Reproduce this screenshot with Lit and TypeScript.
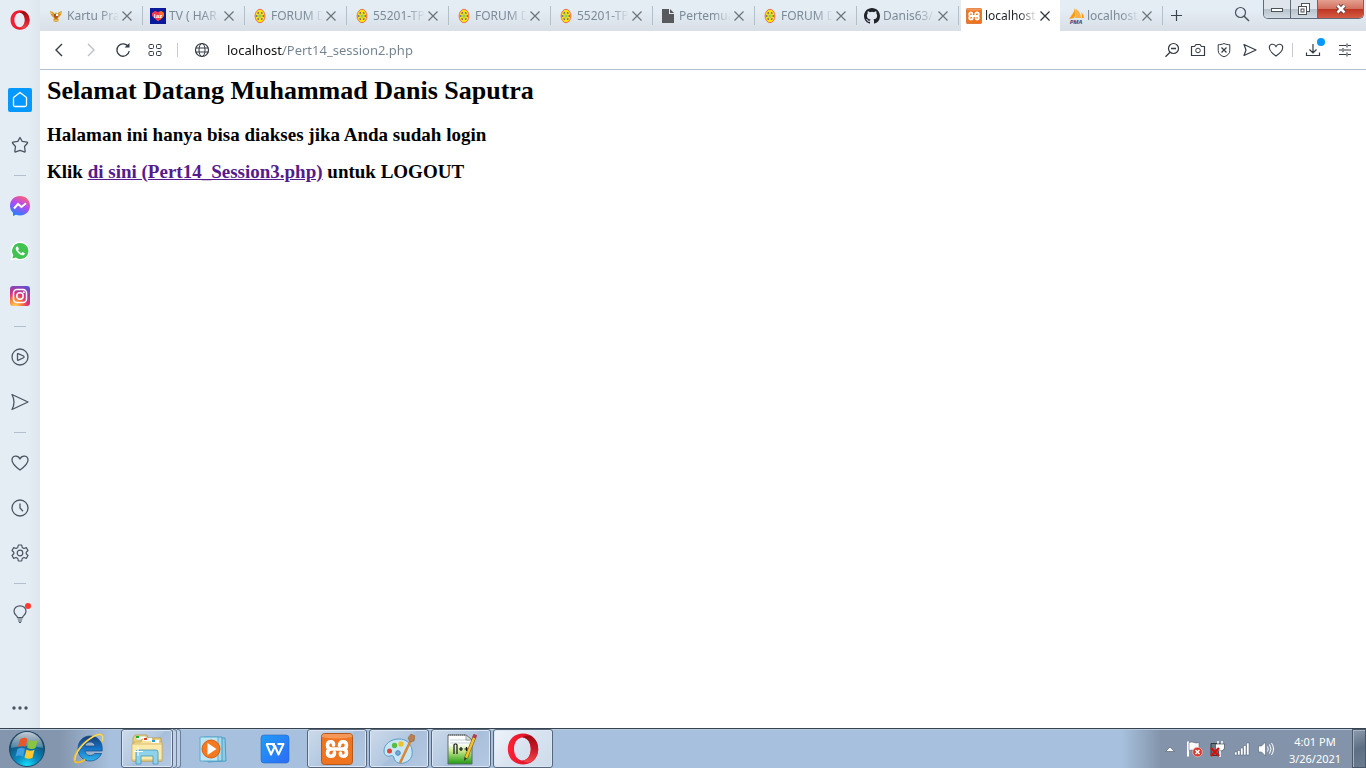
import { LitElement, html, css, svg } from "lit";
import { customElement } from "lit/decorators.js";
import { classMap } from "lit/directives/class-map.js";

const icon = (size: number, body: unknown, box = size) =>
  html`<svg width=${size} height=${size} viewBox="0 0 ${box} ${box}" fill="none" stroke="currentColor" aria-hidden="true">${body}</svg>`;

/* Brand marks */
const operaShape = svg`
  <defs>
    <linearGradient id="op1" x1="0" y1="0" x2="1" y2="0"><stop offset="0" stop-color="#ff2036"/><stop offset=".6" stop-color="#e0162b"/><stop offset="1" stop-color="#d01226"/></linearGradient>
    <linearGradient id="op2" x1="0" y1="0" x2="0" y2="1"><stop offset="0" stop-color="#9c0a12"/><stop offset=".5" stop-color="#c81a26"/><stop offset="1" stop-color="#f5474c"/></linearGradient>
  </defs>
  <path stroke="none" fill="url(#op1)" fill-rule="evenodd" d="M16 .500C7 .500 .800 7 .800 16S7 31.500 16 31.500 31.200 25 31.200 16 25 .500 16 .500zM15.500 4.500c4.800 0 8.300 5 8.300 11.500s-3.500 11.500-8.300 11.500S7 22.500 7 16s3.700-11.500 8.500-11.500z"/>
  <path stroke="none" fill="url(#op2)" d="M15.500 4.500C17.500 2.700 21 1.700 24 3c4.500 2.800 7.200 7.500 7.200 13S28.500 26.200 24 29c-3 1.300-6.500.3-8.500-1.500 4.800 0 8.300-5 8.300-11.500S20.300 4.500 15.500 4.500z"/>`;

const xamppShape = svg`
  <rect x="0.500" y="0.500" width="31" height="31" rx="3" fill="#ee7420" stroke="#b5581c"/>
  <path d="M1 3q0-2 2-2h26q2 0 2 2v1Q16 7 1 4z" fill="#f6a873" stroke="none" opacity=".7"/>
  <path d="M12.500 12Q13 8.700 9.800 8.700 6.500 8.700 6.500 12.300 6.500 16 10.500 16 6.500 16 6.500 19.700 6.500 23.300 9.800 23.300 13.500 23.300 13.500 19.500M19.500 20Q19 23.300 22.200 23.300 25.500 23.300 25.500 19.700 25.500 16 21.500 16 25.500 16 25.500 12.300 25.500 8.700 22.200 8.700 18.500 8.700 18.500 12.500M10.500 16h11" stroke="#fff" stroke-width="3.600" stroke-linejoin="round" stroke-linecap="round"/>`;

const campusShape = svg`
  <ellipse cx="8" cy="8" rx="4.900" ry="6.700" fill="#ffe50a" stroke="#f06c4c" stroke-width="1"/>
  <path d="M5.500 5.500l1.500-1M10.500 5.500L9 4.500M5.500 10.500l1.500 1M10.500 10.500L9 11.500M4.700 7.300v1.400M11.300 7.300v1.400" stroke="#5c4f94" stroke-width="1.500"/>
  <circle cx="8" cy="8" r="1.800" fill="#93d63c" stroke="#c5cf5a" stroke-width=".8"/>`;

const garudaShape = svg`
  <g stroke="none"><path fill="#d99a2b" d="M2 3l3 1 2 2 1-2 1 2 2-2 3-1-1 4-3 3 1 3-3 1-3-1 1-3-3-3z"/>
  <path fill="#b3541e" d="M6 6h4v3l-2 2-2-2z"/><path fill="#fff" d="M8 6h2v2H8z"/><path fill="#e8c05c" d="M5 12h6v1H5zM2 3l3 3-2 0zM14 3l-3 3 2 0z"/></g>`;

const lazShape = svg`
  <rect width="16" height="16" fill="#0a1a9a" stroke="none"/>
  <path d="M8 13L2.500 8V5l2.500-1.500 3 1 3-1L13.500 5v3z" fill="#f5364c" stroke="#f5364c" stroke-linejoin="round"/>
  <path d="M9 4l2.500-1L14 5v3l-4 4z" fill="#ff7a1a" stroke="none" opacity=".8"/>
  <text x="8" y="9.500" text-anchor="middle" font-size="6" font-weight="700" fill="#fff" stroke="none" font-family="Open Sans, sans-serif">laz</text>`;

const fileShape = svg`<path fill="#57595c" stroke="none" d="M2 1h7v5h5v9H2zM10 1l4 4h-4z"/>`;

const githubShape = svg`<path fill="#20242a" stroke="none" d="M8 0C3.580 0 0 3.580 0 8c0 3.540 2.290 6.530 5.470 7.590.4.070.55-.17.55-.38v-1.490c-2.010.37-2.530-.49-2.690-.94-.09-.23-.48-.94-.82-1.130-.28-.15-.68-.52-.01-.53.63-.01 1.080.58 1.230.82.72 1.210 1.870.87 2.330.66.07-.52.28-.87.51-1.070-1.780-.2-3.640-.89-3.640-3.950 0-.87.31-1.590.82-2.150-.08-.2-.36-1.020.08-2.120 0 0 .67-.21 2.200.82a7.600 7.600 0 0 1 4 0c1.530-1.040 2.200-.82 2.200-.82.44 1.100.16 1.920.08 2.120.51.56.82 1.270.82 2.150 0 3.070-1.870 3.750-3.650 3.950.29.25.54.73.54 1.480v2.200c0 .21.15.46.55.38A8 8 0 0 0 16 8c0-4.420-3.580-8-8-8z"/>`;

const pmaShape = svg`
  <g stroke="none"><path fill="#f89c0e" d="M7 0c1 3 1 7-1 10L1 11C3 8 6 5 7 0z"/><path fill="#fbb040" d="M8 1c3 2 5 5 5 9L7 10c1-3 1-6 1-9z"/><path fill="#f89c0e" d="M13 4c2 2 3 4 3 6h-2c0-2 0-4-1-6z"/></g>
  <text x="8" y="15.500" text-anchor="middle" font-size="6" font-weight="700" fill="#46427e" stroke="none" font-style="italic" font-family="Open Sans, sans-serif">PMA</text>`;

/* Line glyphs */
const g = {
  close: svg`<path d="M1.500 1.500l9 9M10.500 1.500l-9 9" stroke-width="1.200"/>`,
  plus: svg`<path d="M6.500 1v11M1 6.500h11" stroke-width="1.200"/>`,
  search: svg`<circle cx="6.500" cy="6.500" r="5" stroke-width="1.200"/><path d="M10 10l5 5" stroke-width="1.500"/>`,
  back: svg`<path d="M11 2L5 8l6 6" stroke-width="1.400"/>`,
  forward: svg`<path d="M5 2l6 6-6 6" stroke-width="1.400"/>`,
  reload: svg`<path d="M13.500 5A6.200 6.200 0 1 0 14.200 9" stroke-width="1.300"/><path d="M9.500 5.500h5V1z" fill="currentColor" stroke="none"/>`,
  grid: svg`<rect x="2" y="2.500" width="4.500" height="4" rx="1"/><rect x="9.500" y="2.500" width="4.500" height="4" rx="1"/><rect x="2" y="9.500" width="4.500" height="4" rx="1"/><rect x="9.500" y="9.500" width="4.500" height="4" rx="1"/>`,
  globe: svg`<circle cx="8" cy="8" r="6.500" stroke-width="1.200"/><ellipse cx="8" cy="8" rx="3" ry="6.500"/><path d="M1.500 6h13M1.500 10h13"/>`,
  zoomOut: svg`<circle cx="9.500" cy="6.500" r="5" stroke-width="1.200"/><path d="M6 10.200L1.500 14.800M7 6.500h5" stroke-width="1.300"/>`,
  camera: svg`<path d="M1.500 4.500h3l1.500-2h4l1.500 2h3v9h-13z" stroke-linejoin="round" stroke-width="1.200"/><circle cx="8" cy="8.500" r="2.300"/>`,
  shield: svg`<path d="M8 1.500c2 1 4 1.200 5.800 1.200V8.500C13.800 12 11 13.800 8 14.800 5 13.800 2.200 12 2.200 8.500V2.700C4 2.700 6 2.500 8 1.500z"/><path d="M5.500 5.500l5 5M10.500 5.500l-5 5" stroke-width="1.200"/>`,
  send: svg`<path d="M2 2.500L14 8 2 13.500 4 8z" stroke-width="1.200" stroke-linejoin="round"/>`,
  heart: svg`<path d="M8 14C5 12 1.300 9 1.300 5.500 1.300 1.700 6.300 1 8 4.500c1.700-3.500 6.700-2.800 6.700 1C14.700 9 11 12 8 14z" stroke-width="1.100"/>`,
  download: svg`<path d="M8 2v8.500M4.500 7.500L8 11l3.500-3.500M1.500 10.500v3h13v-3" stroke-width="1.200"/>`,
  sliders: svg`<path d="M2 3.500h7M11 3.500h3M2 8h3M7 8h7M2 12.500h7M11 12.500h3M10 1.500v4M6 6v4M10 10.500v4" stroke-width="1.100"/>`,
  home: svg`<path d="M2.500 6.500L9 1.500l6.500 5V14q0 1.500-1.500 1.500H4Q2.500 15.500 2.500 14z" stroke="#fff" stroke-width="1.300" stroke-linejoin="round"/>`,
  star: svg`<path d="M9 1.500l2.200 3.800 5 .9c.5.200.5.700.2 1L13.500 10.500l.7 4.800c0 .6-.4.800-.9.600L9 14.300l-4.300 1.600c-.5.200-.9 0-.9-.6l.7-4.800L1.600 7.200c-.3-.3-.3-.8.2-1l5-.9z" stroke-width="1.300" stroke-linejoin="round"/>`,
  play: svg`<circle cx="9" cy="9" r="8" stroke-width="1.300"/><path d="M6.500 6q0-.5.600-.4L12.500 8q1 1 0 1.800L7 12.400q-.5 0-.5-.5z" stroke-width="1.300"/>`,
  sendBig: svg`<path d="M1 1.500L17 9 1 16.500Q5 9 1 1.500z" stroke-width="1.300" stroke-linejoin="round"/>`,
  heartBig: svg`<path d="M9 16C5.500 13.500 1 10 1 6 1 1.500 7 .500 9 5c2-4.500 8-3.500 8 1 0 4-4.500 7.500-8 10z" stroke-width="1.300" stroke-linejoin="round"/>`,
  clock: svg`<circle cx="9" cy="9" r="8" stroke-width="1.300"/><path d="M9 4.500V9l3 3.200" stroke-width="1.300"/>`,
  gear: svg`<path d="M7.300 1h3.400l.5 2.500 1.700 1 2.400-.9L17 6.500 15.200 8.200v1.600L17 11.500l-1.700 2.900-2.400-.9-1.700 1-.5 2.500H7.300l-.5-2.500-1.700-1-2.400.9L1 11.500l1.800-1.700V8.200L1 6.500l1.700-2.900 2.400.9 1.700-1z" stroke-width="1.200" stroke-linejoin="round"/><circle cx="9" cy="9" r="2.800" stroke-width="1.200"/>`,
  bulb: svg`<path d="M6.500 12.500C6 10.500 3 9.500 3 6.200 3 3 5.700.8 9 .8s6 2.200 6 5.400c0 3.300-3 4.300-3.500 6.300z" stroke-width="1.200"/><path d="M6.500 14h5M7 16h4M8 17.500h2" stroke-width="1.200"/>`,
  more: svg`<g fill="currentColor" stroke="none"><circle cx="3" cy="9" r="1.700"/><circle cx="9" cy="9" r="1.700"/><circle cx="15" cy="9" r="1.700"/></g>`,
};

const messenger = svg`
  <defs><linearGradient id="ms" x1=".7" y1="0" x2=".25" y2="1"><stop offset="0" stop-color="#ff6070"/><stop offset=".45" stop-color="#b04af5"/><stop offset="1" stop-color="#1488ff"/></linearGradient></defs>
  <path d="M10 0C4.300 0 0 4.200 0 9.700c0 2.900 1 5.200 3 7V20l3-1.200c1.200.4 2.600.6 4 .6 5.700 0 10-4.200 10-9.700S15.700 0 10 0z" fill="url(#ms)" stroke="none"/>
  <path d="M4 12.500l4-4.500 3.500 3L16 7.300" stroke="#fff" stroke-width="2"/>`;
const whatsapp = svg`
  <path d="M10 .500a9.400 9.400 0 0 0-8.200 14L.500 19.500l5-1.300A9.400 9.400 0 1 0 10 .500z" fill="#fff" stroke="none"/>
  <path d="M10 2a8 8 0 0 0-6.700 12.200L2.400 17.500l3.500-.9A8 8 0 1 0 10 2z" fill="#41c352" stroke="none"/>
  <path d="M7 5.600c-1.700.6-1.800 2.500-.4 4.500 1.700 2.600 4 4.200 6 4.200 1.700 0 2.400-1.300 2.200-2.100l-2.200-1.200-1.100 1.200c-1.300-.4-2.700-1.700-3.400-3l.8-1.100L8 5.800z" fill="#fff" stroke="none"/>`;
const instagram = svg`
  <defs><radialGradient id="ig" cx=".25" cy="1" r="1.150"><stop offset="0" stop-color="#ffd25a"/><stop offset=".3" stop-color="#fa7e3a"/><stop offset=".55" stop-color="#dd2f7c"/><stop offset="1" stop-color="#5851db"/></radialGradient></defs>
  <rect width="20" height="20" rx="3" fill="url(#ig)" stroke="none"/>
  <rect x="3.500" y="3.500" width="13" height="13" rx="3.500" stroke="#fff" stroke-width="1.500"/><circle cx="10" cy="10" r="3.200" stroke="#fff" stroke-width="1.500"/><circle cx="13.800" cy="6.200" r="1" fill="#fff" stroke="none"/>`;

/* Taskbar pictures */
const startOrb = svg`
  <defs>
    <radialGradient id="orb" cx=".5" cy="1" r=".9"><stop offset="0" stop-color="#18e6ff"/><stop offset=".35" stop-color="#0b8fc4"/><stop offset="1" stop-color="#123a5c"/></radialGradient>
    <linearGradient id="gl" x1="0" y1="0" x2="0" y2="1"><stop offset="0" stop-color="#fff" stop-opacity=".75"/><stop offset="1" stop-color="#fff" stop-opacity=".25"/></linearGradient>
  </defs>
  <circle cx="19" cy="19" r="17.500" fill="url(#orb)" stroke="#1b4866"/>
  <path d="M3 18a16 16 0 0 1 32 0q-16-4-32 0z" fill="url(#gl)" stroke="none"/>
  <g stroke="none"><path d="M12 9.500q4-3 7.500-.5l-2 8q-4-2-7.500 0z" fill="#e8562a"/><path d="M21 9.700q4 2.500 8.500.3l-2 8q-4 2-8.300-.3z" fill="#8bc53f"/><path d="M9.500 19q4-2.500 7.500-.3l-2 8q-4-2.300-7.500 0z" fill="#3f9fe0"/><path d="M18.500 19.500q4 2.500 8 .3l-2 8q-4 2-8-.3z" fill="#ffc82e"/></g>`;
const ie = svg`
  <defs><linearGradient id="ie1" x1="0" y1="0" x2="0" y2="1"><stop offset="0" stop-color="#193e78"/><stop offset=".5" stop-color="#1672c4"/><stop offset="1" stop-color="#30b4ee"/></linearGradient></defs>
  <path d="M17 3C10 3 5 8.500 5 15.500S10 28 17 28c5 0 9.500-2.800 11.500-7.500h-7C19 24 12.500 23 12 18h17.200C30 9 25 3 17 3zM12 13c.5-5 9.500-5.500 10 0z" fill="url(#ie1)" stroke="#164b87" stroke-width=".7" fill-rule="evenodd"/>
  <path d="M29 9c4-10-4-9-11-4C8 11-1 24 2 28.500c2 2 7 .5 10-2" stroke="#f5bd25" stroke-width="1.800"/><path d="M29 8c3-8-4-8-11-3C9 11 2 21 2 27" stroke="#fff0a0" stroke-width=".7"/>`;
const explorer = svg`
  <g stroke-width=".8"><path d="M2 5l2-3h12l1 3h13v23H2z" fill="#eed47f" stroke="#b99b45"/><path d="M5 3h10v4H5z" fill="#fff" stroke="#c7bb8b"/><path d="M5 3h3v2H5z" fill="#18b42c" stroke="none"/>
  <path d="M3 9h7l1-3h12l1 3h7v19H1z" fill="#f8e39b" stroke="#c5a653"/><path d="M12 5h9v3h-9z" fill="#fff" stroke="none"/><path d="M13 5h3v2h-3z" fill="#d7432c" stroke="none"/><path d="M20 7h8v3h-8z" fill="#fff" stroke="none"/><path d="M21 7h3v2h-3z" fill="#269bdf" stroke="none"/>
  <path d="M1 11h30v16H1z" fill="#fbeaa9" stroke="#d2b466"/><path d="M5 31V19q0-2 2-2h18q2 0 2 2v12h-5v-8H10v8z" fill="#8fd3ea" stroke="#4298bd"/></g>
  <path d="M7 14v9M3 18.500h9" stroke="#fff"/>`;
const wmp = svg`
  <path d="M10 5h18l1 23-18 1z" fill="#8fcbe5" stroke="#4c9dc4"/><path d="M7 4h18v24H7z" fill="#a8daee" stroke="#4c9dc4"/><path d="M3 4h18v24H3z" fill="#bfe5f3" stroke="#5eabce"/>
  <circle cx="14" cy="16" r="9" fill="#f47a20" stroke="#d95d12"/><path d="M10.500 10l9 6-9 6z" fill="#fff" stroke="none"/>`;
const wps = svg`
  <defs><linearGradient id="wp" x1="0" y1="0" x2="1" y2="1"><stop offset="0" stop-color="#1f9cf8"/><stop offset="1" stop-color="#2d6cf6"/></linearGradient></defs>
  <rect x="2" y="2" width="28" height="28" rx="3" fill="url(#wp)" stroke="#2568c8" stroke-width=".6"/>
  <path d="M7 11h9M7.500 11l4.500 10.500L16 13l3.500 8.500L24.500 11h-6M13.500 11l2.500 4" stroke="#fff" stroke-width="2" stroke-linejoin="round"/>`;
const paint = svg`
  <path d="M16 6C8 6 1 11 1 18c0 4 3 6 6 5 2-1 4 0 4 2 1 5 6 6 10 5 6-2 9-6 8-13C28 10 23 6 16 6z" fill="#c8e7f6" stroke="#5a9cc6"/>
  <circle cx="6.500" cy="18" r="2.500" fill="#e0483c" stroke="none"/><circle cx="11.500" cy="12.500" r="2.700" fill="#59bd45" stroke="none"/><circle cx="18" cy="11" r="2.700" fill="#f1c02c" stroke="none"/><circle cx="15" cy="20" r="2.300" fill="#75abd9" stroke="#4a87bd"/>
  <path d="M28 7L17 30" stroke="#d98738" stroke-width="2.600"/><path d="M27 9l-2-4 3-4 4 2-1 5z" fill="#b98051" stroke="#99673c" stroke-width=".6"/>`;
const notepad = svg`
  <defs><linearGradient id="np" x1="0" y1="0" x2="0" y2="1"><stop offset=".3" stop-color="#fff"/><stop offset=".55" stop-color="#c4e88a"/><stop offset="1" stop-color="#1e9a12"/></linearGradient></defs>
  <path d="M3 2h18l6 5v24H3z" fill="url(#np)" stroke="#61686c"/><path d="M5 7h20M5 10h20" stroke="#c5d3da"/><path d="M3 2h18" stroke="#555" stroke-dasharray="1 1"/><path d="M21 2v5h6z" fill="#dfe4e6" stroke="#61686c" stroke-width=".6"/>
  <path d="M9 21v-9q0-1 1-1h1q1 0 1 1v9M14 16h4M16 14v4M19.500 16h4M21.500 14v4" stroke="#111" stroke-width="1.200"/>
  <path d="M29.500 4L21 25" stroke="#806010" stroke-width="3.600"/><path d="M29.500 4L21 25" stroke="#f5c230" stroke-width="2.400"/><path d="M30.500 1.500L29 5" stroke="#b53d52" stroke-width="4"/><path d="M19.500 24l-.5 4 3-2.500z" fill="#333" stroke="none"/>`;

const tabs = [
  { title: "Kartu Pra", art: garudaShape, box: 16 },
  { title: "TV ( HAR", art: lazShape, box: 16 },
  { title: "FORUM D", art: campusShape, box: 16 },
  { title: "55201-TP", art: campusShape, box: 16 },
  { title: "FORUM D", art: campusShape, box: 16 },
  { title: "55201-TP", art: campusShape, box: 16 },
  { title: "Pertemua", art: fileShape, box: 16 },
  { title: "FORUM D", art: campusShape, box: 16 },
  { title: "Danis63/", art: githubShape, box: 16 },
  { title: "localhost", art: xamppShape, box: 32, active: true },
  { title: "localhost", art: pmaShape, box: 16 },
];

const reset = css`
  * { box-sizing: border-box; }
  button { font: inherit; color: inherit; background: none; border: 0; margin: 0; padding: 0; display: flex; align-items: center; justify-content: center; flex: none; cursor: pointer; }
  svg { display: block; flex: none; }
`;

@customElement("side-bar")
class SideBar extends LitElement {
  static styles = [reset, css`
    :host { display: block; }
    .bar { height: 100%; width: 40px; display: flex; flex-direction: column; background: linear-gradient(90deg, #e4ecf4 70%, #dde5ed); color: #4b5662; }
    .brand { height: 40px; margin-bottom: 37px; }
    .item { height: 45px; width: 40px; position: relative; }
    .line { height: 16px; flex: none; display: flex; align-items: center; justify-content: center; }
    .line::before { content: ""; width: 12px; height: 1px; background: #b0c0ce; }
    .home { width: 24px; height: 24px; border-radius: 2px; background: #0598ff; display: flex; align-items: center; justify-content: center; }
    .dot { position: absolute; right: 9px; top: 12px; width: 6px; height: 6px; border-radius: 50%; background: #ff3b30; }
    .more { height: 40px; margin-top: auto; }
  `];
  item(label: string, body: unknown) {
    return html`<button class="item" aria-label=${label}>${body}</button>`;
  }
  render() {
    return html`<nav class="bar" aria-label="Sidebar">
      <button class="brand" aria-label="Menu">${icon(20, operaShape, 32)}</button>
      ${this.item("Speed Dial", html`<span class="home">${icon(18, g.home)}</span>`)}
      ${this.item("Bookmarks", icon(18, g.star))}
      <div class="line"></div>
      ${this.item("Messenger", icon(20, messenger))}
      ${this.item("WhatsApp", icon(20, whatsapp))}
      ${this.item("Instagram", icon(20, instagram))}
      <div class="line"></div>
      ${this.item("Player", icon(18, g.play))}
      ${this.item("My Flow", icon(18, g.sendBig))}
      <div class="line"></div>
      ${this.item("Favourites", icon(18, g.heartBig))}
      ${this.item("History", icon(18, g.clock))}
      ${this.item("Settings", icon(18, g.gear))}
      <div class="line"></div>
      ${this.item("Tips", html`${icon(18, g.bulb)}<span class="dot"></span>`)}
      <button class="more" aria-label="More">${icon(18, g.more)}</button>
    </nav>`;
  }
}

@customElement("tab-strip")
class TabStrip extends LitElement {
  static styles = [reset, css`
    :host { display: block; font: 12px/16px "Noto Sans", "Open Sans", sans-serif; }
    .strip { height: 31px; display: flex; background: linear-gradient(#e4ecf4 30%, #d8dfe7); padding-left: 1px; color: #7a8b99; }
    .tabs { display: flex; min-width: 0; }
    .tab { width: 102px; display: flex; align-items: center; padding-left: 7px; border-right: 1px solid transparent; border-image: linear-gradient(transparent 7px, #b3bfca 7px, #b3bfca 24px, transparent 24px) 1; }
    .pick { gap: 3px; }
    .title { width: 52px; overflow: hidden; white-space: nowrap; text-align: left; mask-image: linear-gradient(90deg, #000 65%, transparent); }
    .x { width: 16px; height: 16px; color: #6b747c; }
    .active { background: #fff; color: #1d2228; border-image: none; margin: 0 1px 0 2px; width: 99px; padding-left: 5px; }
    .active .x { color: #2b3238; }
    .new { width: 26px; color: #39434c; }
    .find { width: 30px; height: 28px; margin-left: auto; margin-right: 6px; color: #48525b; }
    .win { display: flex; height: 19px; margin-right: 2px; border: 1px solid #5e6b79; border-top: 0; border-radius: 0 0 5px 5px; overflow: hidden; color: #4a525b; }
    .win button { width: 27px; background: linear-gradient(#dfe5eb 48%, #b7c1cb 50%, #d2dbe3); border-right: 1px solid #5e6b79; }
    .win .shut { width: 45px; border-right: 0; background: linear-gradient(#e5a08f, #d37160 48%, #bd3522 50%, #d65b44); }
  `];
  render() {
    return html`<div class="strip">
      <div class="tabs">${tabs.map(t => html`<div class=${classMap({ tab: true, active: !!t.active })}>
        <button class="pick">${icon(16, t.art, t.box)}<span class="title">${t.title}</span></button>
        <button class="x" aria-label="Close tab">${icon(12, g.close)}</button>
      </div>`)}</div>
      <button class="new" aria-label="New tab">${icon(13, g.plus)}</button>
      <button class="find" aria-label="Search tabs">${icon(16, g.search)}</button>
      <div class="win">
        <button aria-label="Minimize">${icon(14, svg`<rect x="1.500" y="6.500" width="11" height="3" fill="#fff"/>`)}</button>
        <button aria-label="Restore">${icon(14, svg`<rect x="4.500" y="1.500" width="8" height="8" fill="#fff"/><rect x="1.500" y="4.500" width="8" height="8" fill="#fff"/><rect x="4" y="7" width="3" height="3"/>`)}</button>
        <button class="shut" aria-label="Close">${icon(14, svg`<path d="M3.500 3.500l7 7M10.500 3.500l-7 7" stroke="#5b3030" stroke-width="4.500"/><path d="M3.500 3.500l7 7M10.500 3.500l-7 7" stroke="#fff" stroke-width="2.600"/>`)}</button>
      </div>
    </div>`;
  }
}

@customElement("address-bar")
class AddressBar extends LitElement {
  static styles = [reset, css`
    :host { display: block; }
    .bar { height: 39px; display: flex; align-items: center; background: #fff; border-bottom: 1px solid #b3bfcb; padding: 0 5px 0 3px; color: #333b44; }
    .nav { width: 32px; height: 32px; position: relative; }
    .off { color: #bcc1c6; }
    .rule { width: 1px; height: 14px; background: #c6cbd0; margin: 0 7px 0 6px; }
    .rule.tight { margin: 0 4px 0 3px; }
    .site { width: 34px; height: 32px; }
    .url { flex: 1; min-width: 0; border: 0; outline: 0; margin: 0 8px; padding: 0; height: 24px; font: 13px/20px "Noto Sans", "Open Sans", sans-serif; color: #73828f;
      background: linear-gradient(90deg, #111 var(--host-end), #73828f var(--host-end)); --host-end: 56px; -webkit-background-clip: text; background-clip: text; -webkit-text-fill-color: transparent; }
    .act { width: 26px; height: 32px; }
    .dot { position: absolute; right: 4px; top: 4px; width: 8px; height: 8px; border-radius: 50%; background: #0598ff; }
  `];
  render() {
    return html`<div class="bar">
      <button class="nav" aria-label="Back">${icon(16, g.back)}</button>
      <button class="nav off" aria-label="Forward">${icon(16, g.forward)}</button>
      <button class="nav" aria-label="Reload">${icon(16, g.reload)}</button>
      <button class="nav" aria-label="Speed Dial">${icon(16, g.grid)}</button>
      <span class="rule"></span>
      <button class="site" aria-label="Site information">${icon(16, g.globe)}</button>
      <input class="url" aria-label="Address" spellcheck="false" value="localhost/Pert14_session2.php">
      <button class="act" aria-label="Zoom out">${icon(16, g.zoomOut)}</button>
      <button class="act" aria-label="Snapshot">${icon(16, g.camera)}</button>
      <button class="act" aria-label="Blocker">${icon(16, g.shield)}</button>
      <button class="act" aria-label="Send to My Flow">${icon(16, g.send)}</button>
      <button class="act" aria-label="Add to bookmarks">${icon(16, g.heart)}</button>
      <span class="rule tight"></span>
      <button class="nav" aria-label="Downloads">${icon(16, g.download)}<span class="dot"></span></button>
      <button class="nav" aria-label="Easy setup">${icon(16, g.sliders)}</button>
    </div>`;
  }
}

@customElement("task-bar")
class TaskBar extends LitElement {
  static styles = [reset, css`
    :host { display: block; font: 11px/17px "Noto Sans", "Open Sans", sans-serif; }
    .bar { height: 40px; display: flex; border-top: 1px solid #37424f; color: #fff;
      background: linear-gradient(90deg, #8496ae 0, #8496ae 60px, #a7c0dd 110px, #a7c0dd calc(100% - 244px), #8394aa calc(100% - 205px)); box-shadow: inset 0 1px #b9cbe0; }
    .start { width: 59px; padding-right: 5px; }
    .apps { display: flex; gap: 2px; }
    .app { width: 60px; height: 39px; }
    .open { border: 1px solid #56677c; border-radius: 3px; background: linear-gradient(135deg, #ccdaea, #b3c8e0 48%, #a8bfdb 52%, #b5c9e2); box-shadow: inset 0 0 0 1px #dce7f3; }
    .current { background: linear-gradient(135deg, #eff4fa, #d8e3f0 50%, #cddbea); }
    .group { display: flex; width: 60px; }
    .group .open { width: 52px; }
    .edge { width: 4px; border: 1px solid #6b7f98; border-left: 0; border-radius: 0 3px 3px 0; background: #bed0e5; }
    .tray { display: flex; align-items: center; margin-left: auto; }
    .t { width: 24px; height: 39px; }
    .time { display: block; text-align: center; width: 74px; height: 39px; padding-top: 3px; }
    .show { width: 14px; height: 39px; border: 1px solid #4b5869; box-shadow: inset 1px 1px #a7b4c4; background: linear-gradient(160deg, #8c9bae, #5f6f83 50%, #6c7c90); }
  `];
  app(label: string, art: unknown, cls = "") {
    return html`<button class="app ${cls}" aria-label=${label}>${icon(32, art)}</button>`;
  }
  render() {
    return html`<div class="bar">
      <button class="start" aria-label="Start">${icon(38, startOrb)}</button>
      <div class="apps">
        ${this.app("Internet Explorer", ie)}
        <div class="group">${this.app("Windows Explorer", explorer, "open")}<span class="edge"></span><span class="edge"></span></div>
        ${this.app("Media Player", wmp)}
        ${this.app("WPS Office", wps)}
        ${this.app("XAMPP", xamppShape, "open")}
        ${this.app("Paint", paint, "open")}
        ${this.app("Notepad++", notepad, "open")}
        ${this.app("Opera", operaShape, "open current")}
      </div>
      <div class="tray">
        <button class="t" aria-label="Show hidden icons">${icon(10, svg`<path d="M.500 7.500L5 3l4.500 4.500z" fill="#fff" stroke="#4b5869" stroke-width=".6"/>`)}</button>
        <button class="t" aria-label="Action Center">${icon(18, svg`<path d="M3 1.500v15" stroke="#fff" stroke-width="2"/><path d="M4 2.500q3-1 5 0t5 0v8q-3 1-5 0t-5 0z" fill="#fff" stroke="#5a6678" stroke-width=".6"/><circle cx="12.500" cy="12" r="4.800" fill="#d9382e" stroke="#f5c6c0" stroke-width=".7"/><path d="M10.500 10l4 4M14.500 10l-4 4" stroke="#fff" stroke-width="1.500"/>`)}</button>
        <button class="t" aria-label="Power">${icon(18, svg`<path d="M2 3.500h8v12H2z" fill="#6b7480" stroke="#303840"/><path d="M9 1v3M13 1v3" stroke="#fff" stroke-width="1.500"/><path d="M6.500 4h9v3q0 4-4.500 4-4.500 0-4.500-4z" fill="#fff" stroke="#303840" stroke-width=".6"/><path d="M11 11v6" stroke="#fff" stroke-width="1.500"/><path d="M2 8l8 8M10 8l-8 8" stroke="#d90e0e" stroke-width="2.400"/>`)}</button>
        <button class="t" aria-label="Network">${icon(18, svg`<g fill="#fff" stroke="#526074" stroke-width=".5"><path d="M1.500 12h2.500v3H1.500zM4.500 10.500H7V15H4.500zM7.500 8H10v7H7.500zM10.500 5.500H13V15h-2.500zM13.500 3H16v12h-2.500z"/></g>`)}</button>
        <button class="t" aria-label="Volume">${icon(18, svg`<path d="M1.500 6h3l4-4v14l-4-4h-3z" fill="#fff" stroke="#526074" stroke-width=".6"/><path d="M10.500 6.500q1.500 2.500 0 5M12.500 4.500q3 4.500 0 9M14.500 3q4 6 0 12" stroke="#fff"/>`)}</button>
        <button class="time"><div>4:01 PM</div><div>3/26/2021</div></button>
        <button class="show" aria-label="Show desktop"></button>
      </div>
    </div>`;
  }
}

@customElement("app-root")
class AppRoot extends LitElement {
  static styles = css`
    :host { display: flex; flex-direction: column; height: 100vh; background: #fff; }
    .window { flex: 1; min-height: 0; display: grid; grid-template-columns: auto 1fr; }
    .view { display: flex; flex-direction: column; min-width: 0; }
    .page { padding: 6px 7px; font-family: "Liberation Serif", serif; color: #000; flex: 1; }
    h2 { font-size: 26px; line-height: 30px; margin: 0 0 18px; }
    h3 { font-size: 19px; line-height: 21px; margin: 0 0 16px; }
    a { color: #551a8b; }
  `;
  render() {
    return html`
      <div class="window">
        <side-bar></side-bar>
        <div class="view">
          <tab-strip></tab-strip>
          <address-bar></address-bar>
          <main class="page">
            <h2>Selamat Datang Muhammad Danis Saputra</h2>
            <h3>Halaman ini hanya bisa diakses jika Anda sudah login</h3>
            <h3>Klik <a href="#logout">di sini (Pert14_Session3.php)</a> untuk LOGOUT</h3>
          </main>
        </div>
      </div>
      <task-bar></task-bar>`;
  }
}
